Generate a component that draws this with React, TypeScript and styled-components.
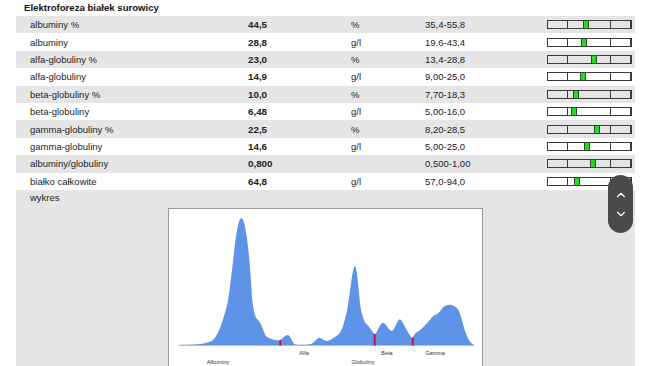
import React from "react"
import styled, { createGlobalStyle } from "styled-components"
import { ChevronUp, ChevronDown } from "lucide-react"

const GlobalStyle = createGlobalStyle`
  html, body {
    margin: 0;
    padding: 0;
    background: #ffffff;
    overflow: hidden;
    font-family: "Liberation Sans", Arial, sans-serif;
    color: #222222;
  }
`

type Result = {
  name: string
  value: string
  unit: string
  range: string
  marker: number
}

const results: Result[] = [
  { name: "albuminy %", value: "44,5", unit: "%", range: "35,4-55,8", marker: 36 },
  { name: "albuminy", value: "28,8", unit: "g/l", range: "19,6-43,4", marker: 34 },
  { name: "alfa-globuliny %", value: "23,0", unit: "%", range: "13,4-28,8", marker: 44 },
  { name: "alfa-globuliny", value: "14,9", unit: "g/l", range: "9,00-25,0", marker: 33 },
  { name: "beta-globuliny %", value: "10,0", unit: "%", range: "7,70-18,3", marker: 26 },
  { name: "beta-globuliny", value: "6,48", unit: "g/l", range: "5,00-16,0", marker: 24 },
  { name: "gamma-globuliny %", value: "22,5", unit: "%", range: "8,20-28,5", marker: 47 },
  { name: "gamma-globuliny", value: "14,6", unit: "g/l", range: "5,00-25,0", marker: 37 },
  { name: "albuminy/globuliny", value: "0,800", unit: "", range: "0,500-1,00", marker: 43 },
  { name: "białko całkowite", value: "64,8", unit: "g/l", range: "57,0-94,0", marker: 27 },
]

const Page = styled.div`
  width: 619px;
  margin: 0 0 0 16px;
`

const Title = styled.h2`
  margin: 0;
  height: 16px;
  padding-left: 8px;
  font-size: 9.6px;
  font-weight: bold;
  line-height: 16px;
  color: #111111;
`

const Row = styled.div<{ $shaded: boolean }>`
  display: grid;
  grid-template-columns: 232px 103px 74px 122px 1fr;
  align-items: center;
  height: 17.4px;
  font-size: 9.5px;
  background: ${props => (props.$shaded ? "#e5e5e5" : "#ffffff")};
`

const NameCell = styled.span`
  padding-left: 14px;
`

const ValueCell = styled.span`
  font-weight: bold;
  font-size: 9.8px;
`

const Cell = styled.span``

const Bar = styled.div`
  position: relative;
  display: grid;
  grid-template-columns: 20px 43px 1fr;
  width: 85px;
  height: 9px;
  box-sizing: border-box;
  border: 1px solid #3a3a3a;
`

const BarSegment = styled.div`
  border-right: 1px solid #3a3a3a;

  &:last-child {
    border-right: none;
  }
`

const Marker = styled.div`
  position: absolute;
  top: -1px;
  bottom: -1px;
  width: 6px;
  box-sizing: border-box;
  background: #22dd22;
  border: 1px solid #2a4a2a;
`

const ChartSection = styled.div`
  background: #e5e5e5;
  height: 176px;
  padding-top: 0;
`

const ChartLabel = styled.div`
  height: 16px;
  padding-left: 14px;
  font-size: 9.5px;
  line-height: 16px;
`

const ChartBox = styled.div`
  width: 313px;
  height: 170px;
  margin: 2px auto 0;
  background: #ffffff;
  border: 1px solid #9a9a9a;
`

const ScrollPill = styled.div`
  position: fixed;
  left: 608px;
  top: 175px;
  width: 25px;
  height: 58px;
  border-radius: 12.5px;
  background: #4a4a4a;
  display: flex;
  flex-direction: column;
  align-items: center;
  justify-content: center;
  gap: 5px;
  color: #ffffff;
`

const curve =
  "M10,136 L26,135.5 C34,135 38,134 43,132 C50,126 54,112 59,92 C64,60 67,12 72,9 C77,8 81,50 83,89 C85,104 86,108 88,110 C91,112 92,116 94,120 C96,126 97,128 100,129 C104,131 108,131.5 111,131.5 C113,130 116,126 119,126 C122,127 123,134 126,135.5 C132,136 138,136 142,135 C146,133 148,128.5 151,128.7 C154,130 156,132 158,132 C162,131 166,128 170,125 C174,120 176,110 178,102 C181,88 183,58 186,57 C189,60 190,95 193,105 C195,112 196,114 198,115.5 C201,118 203,123 206,125.3 C209,122 211,114 214,113.7 C217,114 220,122 223,122 C226,121 228,110 231,110.3 C234,112 238,124 243,128.7 C245,126 247,123 250,122 C254,119 257,115 260,112 C263,108 265,106 268,105.3 C271,104 273,98 276,97 C279,95.5 282,95.5 284,96.5 C287,98 288,99 290,102 C292,106 294,116 296,122 C299,130 302,135 305,136 Z"

const Chart: React.FC = () => (
  <svg width="313" height="170" viewBox="0 0 313 170">
    <path d={curve} fill="#5f93e8" />
    <line x1="9.5" y1="136.3" x2="305" y2="136.3" stroke="#8a9aaa" strokeWidth="0.8" />
    <rect x="110.3" y="131" width="2" height="5.5" fill="#c8143c" />
    <rect x="204.7" y="125" width="2" height="11.5" fill="#c8143c" />
    <rect x="242.7" y="129" width="2" height="7.5" fill="#c8143c" />
    <g fontFamily="Liberation Sans, Arial, sans-serif" fontSize="5.5" fill="#333333">
      <text x="135" y="146" textAnchor="middle">Alfa</text>
      <text x="218" y="146" textAnchor="middle">Beta</text>
      <text x="266" y="146" textAnchor="middle">Gamma</text>
      <text x="49" y="155" textAnchor="middle">Albuminy</text>
      <text x="194" y="155" textAnchor="middle">Globuliny</text>
    </g>
  </svg>
)

const App: React.FC = () => (
  <>
    <GlobalStyle />
    <Page>
      <Title>Elektroforeza białek surowicy</Title>
      {results.map((item, index) => (
        <Row key={item.name} $shaded={index % 2 === 0}>
          <NameCell>{item.name}</NameCell>
          <ValueCell>{item.value}</ValueCell>
          <Cell>{item.unit}</Cell>
          <Cell>{item.range}</Cell>
          <Bar>
            <BarSegment />
            <BarSegment />
            <BarSegment />
            <Marker style={{ left: item.marker - 1 }} />
          </Bar>
        </Row>
      ))}
      <ChartSection>
        <ChartLabel>wykres</ChartLabel>
        <ChartBox>
          <Chart />
        </ChartBox>
      </ChartSection>
    </Page>
    <ScrollPill>
      <ChevronUp size={14} strokeWidth={2} />
      <ChevronDown size={14} strokeWidth={2} />
    </ScrollPill>
  </>
)

export default App
